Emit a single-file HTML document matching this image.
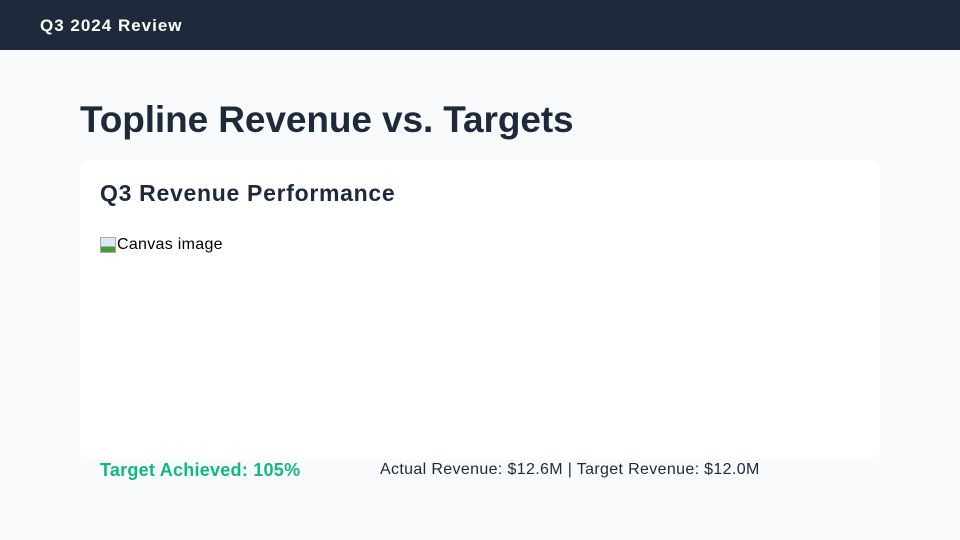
<!DOCTYPE html>
<html><head><meta charset="utf-8"><style>
*{margin:0;padding:0;box-sizing:border-box}
body{width:960px;height:540px;background:#f8fafc;font-family:"Liberation Sans",sans-serif;position:relative;overflow:hidden}
.top{position:absolute;left:0;top:0;width:960px;height:50px;background:#1e293b;color:#fff;font-size:17px;font-weight:bold;padding-left:40px;line-height:51px;letter-spacing:1px}
h1{position:absolute;left:80px;top:99px;font-size:37px;font-weight:bold;color:#1e293b;letter-spacing:-0.1px}
.card{position:absolute;left:80px;top:160px;width:800px;height:300px;background:#fff;border-radius:12px}
h2{position:absolute;left:100px;top:180px;font-size:23px;font-weight:bold;color:#1e293b;letter-spacing:0.7px}
.img{position:absolute;left:100px;top:236px;font-size:16px;color:#000;display:flex;align-items:center;letter-spacing:0.3px}
.ic{width:16px;height:16px;border:1px solid #aaa;background:linear-gradient(#dde8f5 60%,#4a9a3a 60%);margin-right:1px}
.g{position:absolute;left:100px;top:460px;font-size:18px;font-weight:bold;color:#10b981;letter-spacing:0.25px}
.r{position:absolute;left:380px;top:461px;font-size:16px;color:#1e293b;letter-spacing:0.35px}
</style></head><body>
<div class="top">Q3 2024 Review</div>
<h1>Topline Revenue vs. Targets</h1>
<div class="card"></div>
<h2>Q3 Revenue Performance</h2>
<div class="img"><span class="ic"></span>Canvas image</div>
<div class="g">Target Achieved: 105%</div>
<div class="r">Actual Revenue: $12.6M | Target Revenue: $12.0M</div>
</body></html>
